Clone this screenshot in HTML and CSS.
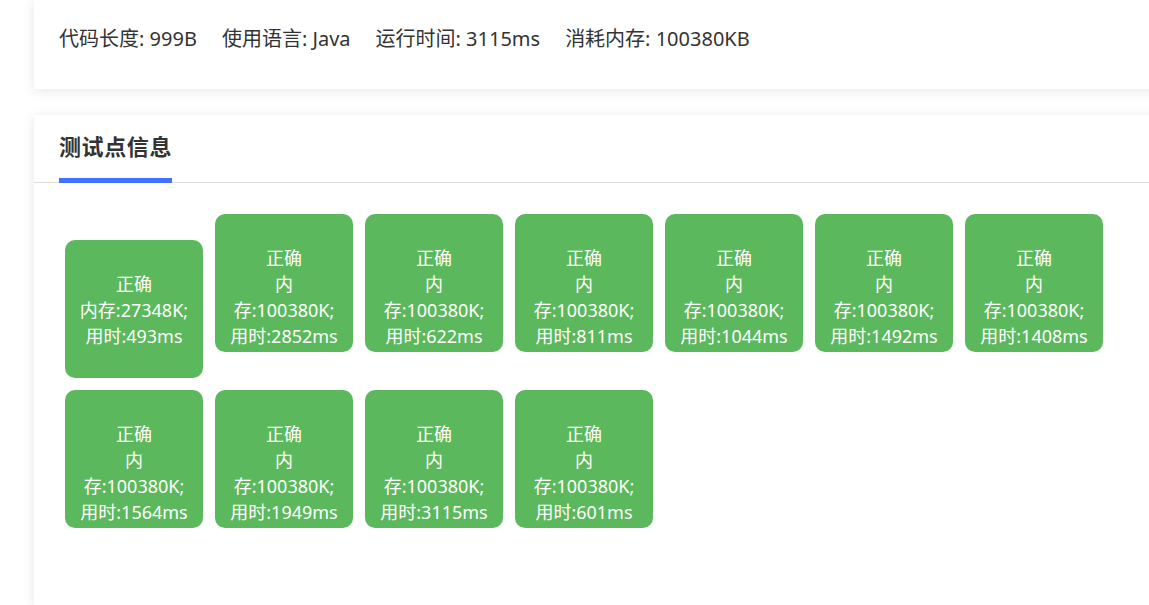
FILE: index.html
```html
<!DOCTYPE html>
<html lang="zh-CN">
<head>
<meta charset="utf-8">
<title>提交详情</title>
<link rel="stylesheet" href="styles.css">
</head>
<body>
<div class="page">
  <div class="card summary">
    <span class="item">代码长度: 999B</span>
    <span class="item">使用语言: Java</span>
    <span class="item">运行时间: 3115ms</span>
    <span class="item">消耗内存: 100380KB</span>
  </div>
  <div class="card tests">
    <div class="tabs">
      <div class="tab">测试点信息</div>
    </div>
    <div class="cases">
      <div class="case">正确<br>内存:27348K;<br>用时:493ms</div><div class="case">正确<br>内存:100380K;<br>用时:2852ms</div><div class="case">正确<br>内存:100380K;<br>用时:622ms</div><div class="case">正确<br>内存:100380K;<br>用时:811ms</div><div class="case">正确<br>内存:100380K;<br>用时:1044ms</div><div class="case">正确<br>内存:100380K;<br>用时:1492ms</div><div class="case">正确<br>内存:100380K;<br>用时:1408ms</div><div class="case">正确<br>内存:100380K;<br>用时:1564ms</div><div class="case">正确<br>内存:100380K;<br>用时:1949ms</div><div class="case">正确<br>内存:100380K;<br>用时:3115ms</div><div class="case">正确<br>内存:100380K;<br>用时:601ms</div>
    </div>
  </div>
</div>
</body>
</html>
```
FILE: styles.css
```css
html, body {
  margin: 0;
  padding: 0;
  background: #ffffff;
  overflow: hidden;
}
body {
  font-family: "Noto Sans", "Noto Sans CJK SC", sans-serif;
  color: #333333;
}
.page {
  padding-left: 34px;
  margin-right: -40px;
}
.card {
  background: #ffffff;
  box-shadow: 0 2px 12px 0 rgba(0, 0, 0, 0.1);
}
.summary {
  display: flex;
  gap: 25px;
  padding: 24px 25px 35px;
  font-size: 20px;
  line-height: 30px;
}
.tests {
  margin-top: 26px;
  height: 490px;
}
.tabs {
  padding: 0 25px;
  border-bottom: 1px solid #dddddd;
}
.tab {
  display: inline-block;
  padding-top: 16px;
  padding-bottom: 17px;
  font-size: 22px;
  letter-spacing: 0.6px;
  line-height: 30px;
  font-weight: 700;
  color: #333333;
  border-bottom: 5px solid #4271ff;
  margin-bottom: -1px;
}
.cases {
  padding: 31px 31px 0;
  font-size: 0;
  max-width: 1100px;
}
.case {
  display: inline-block;
  vertical-align: baseline;
  box-sizing: border-box;
  width: 138px;
  height: 138px;
  margin: 0 12px 12px 0;
  padding: 31px 13px 0;
  border-radius: 10px;
  background: #5cb85c;
  color: #ffffff;
  font-size: 18px;
  line-height: 26px;
  text-align: center;
}
```
